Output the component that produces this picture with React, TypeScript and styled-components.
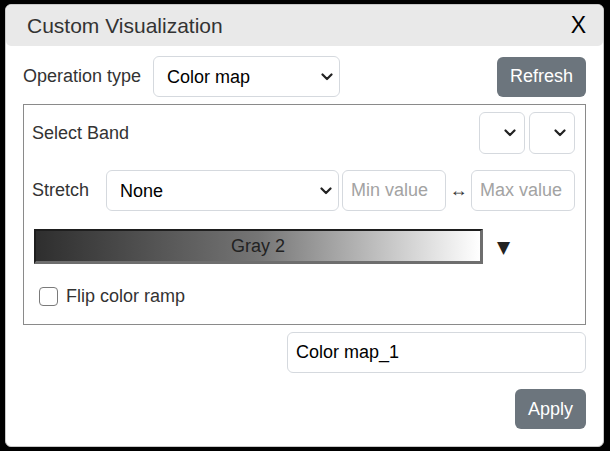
import React, { useState } from "react";
import styled, { createGlobalStyle } from "styled-components";

const GlobalStyle = createGlobalStyle`
  html, body {
    margin: 0;
    background: #000;
  }
  body {
    padding: 4px 0 0 5px;
    font-family: "Liberation Sans", Arial, sans-serif;
    color: #212529;
  }
`;

const Dialog = styled.div`
  width: 599px;
  box-sizing: border-box;
  background: #fff;
  border: 1px solid #c8c8c8;
  border-radius: 6px;
  overflow: hidden;
`;
const Header = styled.div`
  height: 41px;
  background: #e9e9e9;
  border-radius: 5px;
  display: flex;
  align-items: center;
  justify-content: space-between;
  padding: 0 17px 0 21px;
`;
const Title = styled.h3`
  margin: 0;
  font-size: 21px;
  font-weight: 400;
  color: #333;
`;
const Close = styled.button`
  border: none;
  background: none;
  padding: 0;
  font-family: inherit;
  font-size: 23px;
  color: #000;
  cursor: pointer;
`;
const Body = styled.div`
  padding: 10px 17px 17px;
  display: flex;
  flex-direction: column;
`;
const Row = styled.div<{ $gap?: number; $mt?: number }>`
  display: flex;
  align-items: center;
  gap: ${(p) => p.$gap ?? 0}px;
  margin-top: ${(p) => p.$mt ?? 0}px;
`;
const Label = styled.span<{ $width?: number }>`
  font-size: 18px;
  color: #333;
  ${(p) => (p.$width ? `width: ${p.$width}px;` : "")}
  flex-shrink: 0;
`;
const Spacer = styled.div`
  flex: 1;
`;
const SelectWrap = styled.div<{ $width: number; $ml?: number }>`
  position: relative;
  width: ${(p) => p.$width}px;
  margin-left: ${(p) => p.$ml ?? 0}px;
  flex-shrink: 0;
`;
const Select = styled.select<{ $h?: number; $compact?: boolean }>`
  appearance: none;
  width: 100%;
  height: ${(p) => p.$h ?? 41}px;
  box-sizing: border-box;
  border: 1px solid #d5d9de;
  border-radius: 6px;
  background: #fff;
  padding: ${(p) => (p.$compact ? "0" : "0 36px 0 13px")};
  font-family: inherit;
  font-size: 18px;
  color: #000;
  outline: none;
`;
const Chevron = styled.svg<{ $right: number }>`
  position: absolute;
  right: ${(p) => p.$right}px;
  top: 50%;
  margin-top: -4px;
  pointer-events: none;
`;
const Input = styled.input<{ $width: number; $ml?: number }>`
  width: ${(p) => p.$width}px;
  margin-left: ${(p) => p.$ml ?? 0}px;
  height: 41px;
  box-sizing: border-box;
  border: 1px solid #d5d9de;
  border-radius: 6px;
  padding: 0 8px;
  font-family: inherit;
  font-size: 18px;
  color: #000;
  outline: none;
  flex-shrink: 0;
  &::placeholder {
    color: #a3a3a3;
  }
`;
const Arrows = styled.span`
  width: 25px;
  text-align: center;
  font-size: 18px;
  color: #333;
  flex-shrink: 0;
`;
const Button = styled.button`
  height: 40px;
  padding: 0 13px;
  border: none;
  border-radius: 6px;
  background: #6c757d;
  color: #fff;
  font-family: inherit;
  font-size: 18px;
  cursor: pointer;
`;
const Panel = styled.div`
  margin-top: 7px;
  border: 1px solid #8a8a8a;
  padding: 7px 10px 14px 8px;
  display: flex;
  flex-direction: column;
`;
const Ramp = styled.div`
  width: 449px;
  height: 35px;
  box-sizing: border-box;
  border-style: solid;
  border-width: 2px 3px 3px 2px;
  border-color: #1e1e1e #6e6e6e #6e6e6e #1e1e1e;
  background: linear-gradient(to right, #2e2e2e 0%, #757575 50%, #fff 100%);
  display: flex;
  align-items: center;
  justify-content: center;
  font-size: 18px;
  color: #222;
  margin-left: 2px;
`;
const Caret = styled.span`
  margin-left: 14px;
  font-family: "DejaVu Sans", sans-serif;
  font-size: 17px;
  color: #222;
`;
const Check = styled.input`
  appearance: none;
  width: 19px;
  height: 19px;
  margin: 0 8px 0 7px;
  border: 1px solid #7a7a7a;
  border-radius: 4px;
  background: #fff;
`;
const End = styled.div<{ $mt: number }>`
  display: flex;
  justify-content: flex-end;
  margin-top: ${(p) => p.$mt}px;
`;

const ChevronIcon = ({ right }: { right: number }) => (
  <Chevron $right={right} width="12" height="8" viewBox="0 0 12 8">
    <path
      d="M1.5 1.5 6 6l4.5-4.5"
      fill="none"
      stroke="#222"
      strokeWidth="2.2"
      strokeLinecap="round"
      strokeLinejoin="round"
    />
  </Chevron>
);

const App: React.FC = () => {
  const [name, setName] = useState("Color map_1");
  const [flip, setFlip] = useState(false);

  return (
    <>
      <GlobalStyle />
      <Dialog>
        <Header>
          <Title>Custom Visualization</Title>
          <Close>X</Close>
        </Header>
        <Body>
          <Row>
            <Label>Operation type</Label>
            <SelectWrap $width={187} $ml={12}>
              <Select defaultValue="colormap">
                <option value="colormap">Color map</option>
              </Select>
              <ChevronIcon right={7} />
            </SelectWrap>
            <Spacer />
            <Button>Refresh</Button>
          </Row>

          <Panel>
            <Row $gap={4}>
              <Label>Select Band</Label>
              <Spacer />
              <SelectWrap $width={46}>
                <Select $h={42} $compact />
                <ChevronIcon right={9} />
              </SelectWrap>
              <SelectWrap $width={46}>
                <Select $h={42} $compact />
                <ChevronIcon right={9} />
              </SelectWrap>
            </Row>

            <Row $mt={16}>
              <Label $width={74}>Stretch</Label>
              <SelectWrap $width={233}>
                <Select defaultValue="none">
                  <option value="none">None</option>
                </Select>
                <ChevronIcon right={7} />
              </SelectWrap>
              <Input $width={104} $ml={3} placeholder="Min value" />
              <Arrows>↔</Arrows>
              <Input $width={104} placeholder="Max value" />
            </Row>

            <Row $mt={18}>
              <Ramp>Gray 2</Ramp>
              <Caret>▼</Caret>
            </Row>

            <Row $mt={18} style={{ height: 28 }}>
              <Check
                type="checkbox"
                checked={flip}
                onChange={(e) => setFlip(e.target.checked)}
              />
              <Label>Flip color ramp</Label>
            </Row>
          </Panel>

          <End $mt={7}>
            <Input
              $width={299}
              value={name}
              onChange={(e) => setName(e.target.value)}
            />
          </End>
          <End $mt={16}>
            <Button>Apply</Button>
          </End>
        </Body>
      </Dialog>
    </>
  );
};

export default App;
